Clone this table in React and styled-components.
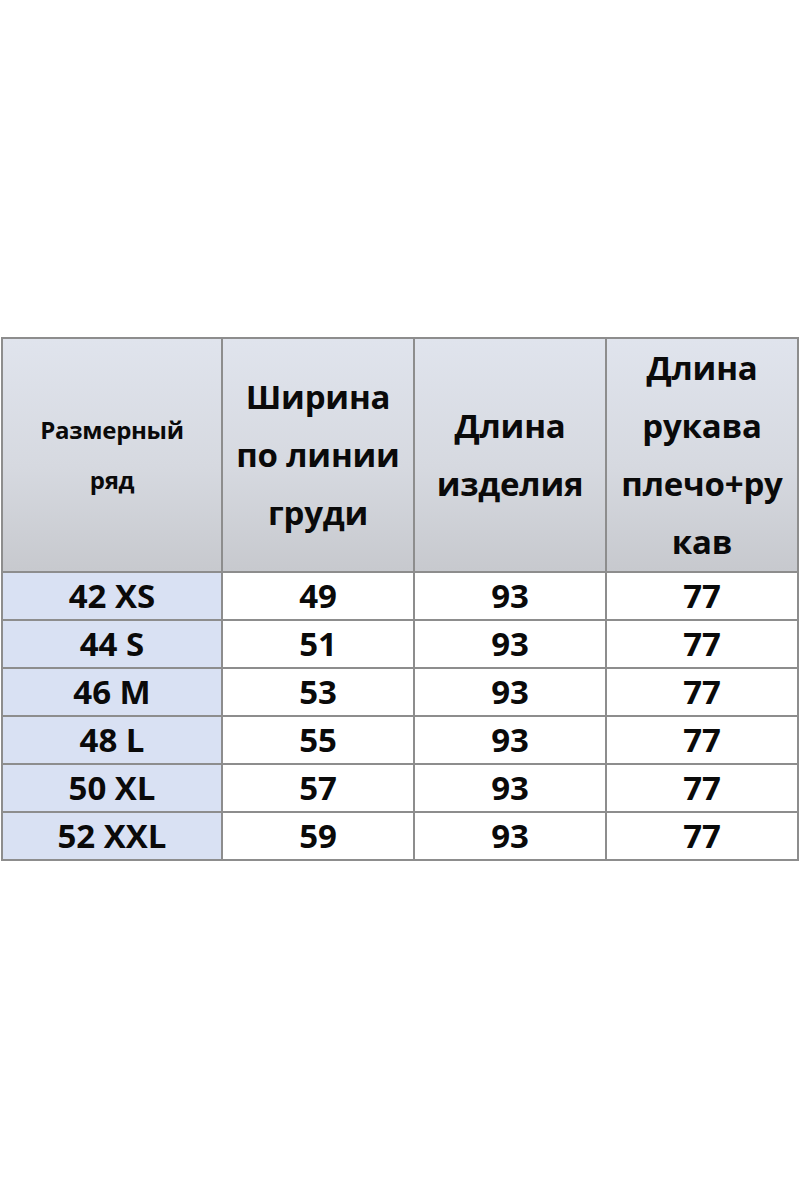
import React from 'react';
import styled, { createGlobalStyle } from 'styled-components';

const GlobalStyle = createGlobalStyle`
  html, body {
    margin: 0;
    padding: 0;
    background: #ffffff;
  }
  body {
    font-family: 'Open Sans', 'Noto Sans', 'DejaVu Sans', sans-serif;
    color: #0a0a0a;
  }
`;

const Page = styled.div`
  width: 800px;
  height: 1200px;
  padding-top: 337px;
  box-sizing: border-box;
  background: #ffffff;
`;

const Table = styled.table`
  margin-left: 1px;
  width: 796px;
  border-collapse: collapse;
  table-layout: fixed;
`;

const Col = styled.col`
  width: ${({ w }) => w}px;
`;

const HeadCell = styled.th`
  height: 231px;
  padding: 0;
  border: 2px solid #8d8d8d;
  background: linear-gradient(180deg, #e0e4ed 0%, #d6d9e0 55%, #c7c9ce 100%);
  text-align: center;
  vertical-align: middle;
  font-weight: 700;
  font-size: ${({ small }) => (small ? '24px' : '33px')};
  line-height: ${({ small }) => (small ? '50px' : '58px')};
  letter-spacing: ${({ small }) => (small ? '-0.3px' : '-0.2px')};
`;

const Cell = styled.td`
  height: 46px;
  padding: 0;
  border: 2px solid #8d8d8d;
  background: ${({ accent }) => (accent ? '#d9e1f3' : '#ffffff')};
  text-align: center;
  vertical-align: middle;
  font-weight: 700;
  font-size: 33px;
  line-height: 44px;
`;

const headers = [
  { lines: ['Размерный', 'ряд'], small: true },
  { lines: ['Ширина', 'по линии', 'груди'] },
  { lines: ['Длина', 'изделия'] },
  { lines: ['Длина', 'рукава', 'плечо+ру', 'кав'] },
];

const widths = [220, 192, 192, 192];

const rows = [
  ['42 XS', 49, 93, 77],
  ['44 S', 51, 93, 77],
  ['46 M', 53, 93, 77],
  ['48 L', 55, 93, 77],
  ['50 XL', 57, 93, 77],
  ['52 XXL', 59, 93, 77],
];

const App = () => (
  <Page>
    <GlobalStyle />
    <Table>
      <colgroup>
        {widths.map((w, i) => (
          <Col key={i} w={w} />
        ))}
      </colgroup>
      <thead>
        <tr>
          {headers.map((h, i) => (
            <HeadCell key={i} small={h.small}>
              {h.lines.map((l, j) => (
                <React.Fragment key={j}>
                  {j > 0 && <br />}
                  {l}
                </React.Fragment>
              ))}
            </HeadCell>
          ))}
        </tr>
      </thead>
      <tbody>
        {rows.map((r) => (
          <tr key={r[0]}>
            {r.map((v, i) => (
              <Cell key={i} accent={i === 0}>
                {v}
              </Cell>
            ))}
          </tr>
        ))}
      </tbody>
    </Table>
  </Page>
);

export default App;
